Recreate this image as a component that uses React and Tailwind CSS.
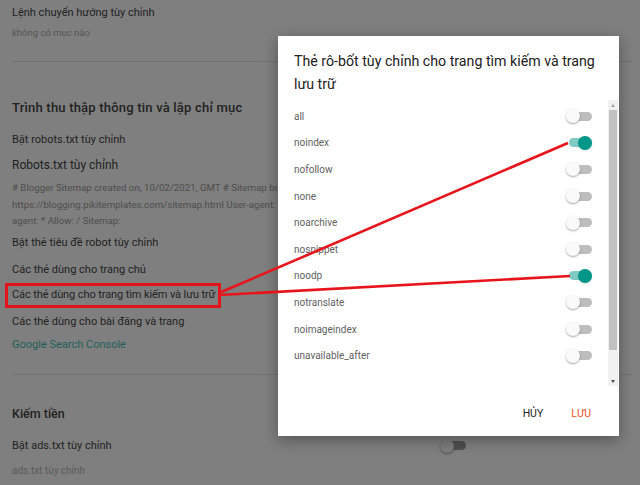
const robotTags = [
  { name: 'all', on: false },
  { name: 'noindex', on: true },
  { name: 'nofollow', on: false },
  { name: 'none', on: false },
  { name: 'noarchive', on: false },
  { name: 'nosnippet', on: false },
  { name: 'noodp', on: true },
  { name: 'notranslate', on: false },
  { name: 'noimageindex', on: false },
  { name: 'unavailable_after', on: false },
];

function Toggle({ on }) {
  return (
    <div className="relative w-[26px] h-[14px] flex items-center">
      <div
        className={`absolute left-[3px] right-0 h-[9px] rounded-full ${on ? 'bg-[#80cbc4]' : 'bg-[#bdbdbd]'}`}
      />
      <div
        className={`absolute top-0 w-[14px] h-[14px] rounded-full ${
          on ? 'right-0 bg-[#009688] shadow-sm' : 'left-0 bg-[#fafafa] shadow-[0_1px_2px_rgba(0,0,0,0.35)]'
        }`}
      />
    </div>
  );
}

function App() {
  return (
    <div
      className="relative w-[640px] h-[485px] overflow-hidden bg-[#7f7f7f]"
      style={{ fontFamily: 'Roboto, "Noto Sans", sans-serif' }}
    >
      {/* Settings page, dimmed under the dialog */}
      <div className="pl-[12px] pt-[5px] text-[#222]">
        <div className="text-[11px] leading-[16px]">Lệnh chuyển hướng tùy chỉnh</div>
        <div className="text-[9.5px] leading-[14px] mt-[5px] text-[#555]">không có mục nào</div>
        <div className="h-px bg-[#737373] mt-[21px] w-[620px]" />

        <h2 className="text-[13px] font-medium leading-[18px] mt-[37px] tracking-[0.2px]">
          Trình thu thập thông tin và lập chỉ mục
        </h2>
        <div className="text-[11px] leading-[16px] mt-[15px]">Bật robots.txt tùy chỉnh</div>
        <div className="text-[12px] leading-[16px] mt-[9px]">Robots.txt tùy chỉnh</div>
        <div className="text-[9.7px] leading-[16.6px] mt-[7px] text-[#4d4d4d] whitespace-nowrap w-[265px] overflow-hidden">
          <div># Blogger Sitemap created on, 10/02/2021, GMT # Sitemap built</div>
          <div>https://blogging.pikitemplates.com/sitemap.html User-agent: Me</div>
          <div>agent: * Allow: / Sitemap:</div>
        </div>
        <div className="text-[11px] leading-[16px] mt-[5px]">Bật thẻ tiêu đề robot tùy chỉnh</div>
        <div className="text-[11px] leading-[16px] mt-[11px]">Các thẻ dùng cho trang chủ</div>
        <div className="mt-[5px] -ml-[7px] w-[216px] h-[25px] border-[3px] border-[#e3141c] flex items-center pl-[4px] whitespace-nowrap">
          <span className="text-[11px] leading-[16px] tracking-[-0.1px]">Các thẻ dùng cho trang tìm kiếm và lưu trữ</span>
        </div>
        <div className="text-[11px] leading-[16px] mt-[6px]">Các thẻ dùng cho bài đăng và trang</div>
        <div className="text-[11px] leading-[16px] mt-[7px] text-[#1f5f5b]">Google Search Console</div>
        <div className="h-px bg-[#737373] mt-[21px] w-[620px]" />

        <h2 className="text-[12.5px] font-medium leading-[18px] mt-[30px]">Kiếm tiền</h2>
        <div className="flex items-center mt-[15px] w-[454px] justify-between">
          <span className="text-[11px] leading-[16px]">Bật ads.txt tùy chỉnh</span>
          <div className="relative w-[26px] h-[14px] flex items-center">
            <div className="absolute left-[3px] right-0 h-[9px] rounded-full bg-[#505050]" />
            <div className="absolute left-0 top-0 w-[14px] h-[14px] rounded-full bg-[#7d7d7d] shadow-[0_1px_2px_rgba(0,0,0,0.4)]" />
          </div>
        </div>
        <div className="text-[10px] leading-[14px] mt-[10px] text-[#5a5a5a]">ads.txt tùy chỉnh</div>
      </div>

      {/* Dialog */}
      <div className="absolute left-[278px] top-[36px] w-[341px] h-[400px] bg-white shadow-[0_4px_14px_rgba(0,0,0,0.35)] flex flex-col">
        <h1 className="px-[16px] pt-[14px] text-[14.2px] leading-[23px] text-[#212121]">
          Thẻ rô-bốt tùy chỉnh cho trang tìm kiếm và trang lưu trữ
        </h1>
        <div className="flex mt-[4px] h-[286px]">
          <div className="flex-1 pl-[16px] pr-[16px] pt-[3px]">
            {robotTags.map((tag) => (
              <div key={tag.name} className="h-[26.6px] flex items-center justify-between">
                <span className="text-[10px] text-[#616161]">{tag.name}</span>
                <Toggle on={tag.on} />
              </div>
            ))}
          </div>
          <div className="w-[10px] mr-px bg-[#f1f1f1] flex flex-col items-center">
            <div className="h-[10px] flex items-center justify-center">
              <div className="w-0 h-0 border-l-[2.5px] border-r-[2.5px] border-b-[3px] border-l-transparent border-r-transparent border-b-[#a3a3a3]" />
            </div>
            <div className="w-[8px] h-[240px] bg-[#c1c1c1]" />
            <div className="flex-1" />
            <div className="h-[10px] flex items-center justify-center">
              <div className="w-0 h-0 border-l-[2.5px] border-r-[2.5px] border-t-[3px] border-l-transparent border-r-transparent border-t-[#505050]" />
            </div>
          </div>
        </div>
        <div className="flex justify-end items-center gap-[28px] pr-[28px] mt-[20px]">
          <button className="text-[10.5px] font-normal text-[#212121]">HỦY</button>
          <button className="text-[10.5px] font-normal text-[#f4511e]">LƯU</button>
        </div>
      </div>

      {/* Red pointer lines */}
      <svg className="absolute inset-0 pointer-events-none" width="640" height="485">
        <line x1="219" y1="293" x2="568" y2="143" stroke="#e8141c" strokeWidth="2.6" />
        <line x1="219" y1="295" x2="570" y2="276" stroke="#e8141c" strokeWidth="2.6" />
      </svg>
    </div>
  );
}

export default App;
